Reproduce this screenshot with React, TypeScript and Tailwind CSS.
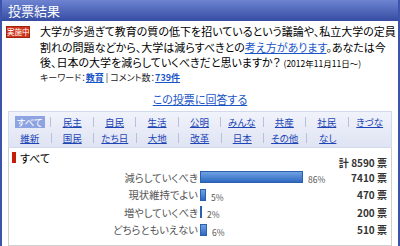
import React from 'react';

const partiesTop = ['すべて', '民主', '自民', '生活', '公明', 'みんな', '共産', '社民', 'きづな'];
const partiesBottom = ['維新', '国民', 'たち日', '大地', '改革', '日本', 'その他', 'なし'];

const results = [
    { label: '減らしていくべき', pct: 86, votes: 7410 },
    { label: '現状維持でよい', pct: 5, votes: 470 },
    { label: '増やしていくべき', pct: 2, votes: 200 },
    { label: 'どちらともいえない', pct: 6, votes: 510 },
];

function TabRow({ items }: { items: string[] }) {
    return (
        <div className="flex h-[16px] items-center">
            {items.map((name, i) => (
                <div key={name} className="flex w-[42.5px] items-center">
                    <div className="flex flex-1 justify-center">
                        {name === 'すべて' ? (
                            <span className="bg-[#8ea3e1] px-[2px] leading-[12px] text-white">{name}</span>
                        ) : (
                            <a className="leading-[12px] text-[#1d45b5] underline">{name}</a>
                        )}
                    </div>
                    {i < items.length - 1 && <span className="h-[10px] w-px bg-[#b9c0d8]" />}
                </div>
            ))}
        </div>
    );
}

export default function App() {
    return (
        <div className="h-[246px] w-[400px] overflow-hidden bg-white font-['Noto_Sans_CJK_JP',sans-serif] [font-feature-settings:'palt']">
            <div className="min-h-[260px] border-x-2 border-[#3d54aa]">
                {/* 見出し */}
                <div className="flex h-[21px] items-center bg-linear-to-b from-[#6e84d2] to-[#364ca2] pl-[6px] text-[13px] text-white">
                    投票結果
                </div>

                {/* 質問文 */}
                <div className="flex pt-[3px]">
                    <div className="w-[38px] shrink-0 pl-[4px] pt-[2px]">
                        <span className="block w-[24px] whitespace-nowrap border border-[#9e2410] bg-[#cf3519] text-center text-[7.5px] leading-[10px] text-white">
                            実施中
                        </span>
                    </div>
                    <div className="text-[11px] leading-[15.5px] whitespace-nowrap text-black">
                        大学が多過ぎて教育の質の低下を招いているという議論や、私立大学の定員
                        <br />
                        割れの問題などから、大学は減らすべきとの
                        <a className="text-[#1a55c8] underline">考え方があります</a>
                        。あなたは今
                        <br />
                        後、日本の大学を減らしていくべきだと思いますか？
                        <span className="ml-[3px] text-[8.5px]">(2012年11月11日〜)</span>
                        <div className="text-[9px] leading-[11px] text-[#222]">
                            キーワード：<a className="font-bold text-[#1a55c8] underline">教育</a>
                            <span className="mx-[2px]">|</span>コメント数：
                            <a className="font-bold text-[#1a55c8] underline">739件</a>
                        </div>
                    </div>
                </div>

                <div className="mt-[9px] text-center text-[11px] leading-[14px]">
                    <a className="text-[#1a55c8] underline">この投票に回答する</a>
                </div>

                {/* 政党タブ */}
                <div className="mx-[6px] mt-[5px] border border-[#d3d9ec] bg-linear-to-b from-[#f1f3fb] to-[#dfe4f3] pb-[1px] pt-[2px] text-[9.5px]">
                    <TabRow items={partiesTop} />
                    <TabRow items={partiesBottom} />
                </div>

                {/* 結果 */}
                <div className="mx-[6px] border border-t-0 border-[#cfcfcf] pb-[6px]">
                    <div className="flex h-[21px] justify-between">
                        <div className="flex items-center gap-[4px] self-start pl-[3px] pt-[4px] text-[11px] leading-[12px] text-black">
                            <span className="h-[11px] w-[4px] bg-[#c41d0b]" />
                            すべて
                        </div>
                        <div className="self-end pr-[4px] text-[10px] font-bold leading-[12px] text-[#333]">
                            計 8590 票
                        </div>
                    </div>
                    {results.map((r) => (
                        <div key={r.label} className="flex h-[17.5px] items-center">
                            <div className="w-[189px] text-right text-[10.3px] text-[#555]">{r.label}</div>
                            <div className="ml-[2px] flex flex-1 items-center">
                                <div
                                    className="h-[12px] border border-[#2c5fae] bg-linear-to-b from-[#6fa2e4] to-[#2f69c0]"
                                    style={{ width: Math.max(2, Math.round(r.pct * 1.2)) }}
                                />
                                <span className="ml-[5px] pt-[5px] text-[8.5px] text-[#555]">{r.pct}%</span>
                            </div>
                            <div className="w-[60px] pr-[4px] text-right text-[10px] font-bold text-[#333]">
                                {r.votes} 票
                            </div>
                        </div>
                    ))}
                </div>
            </div>
        </div>
    );
}
